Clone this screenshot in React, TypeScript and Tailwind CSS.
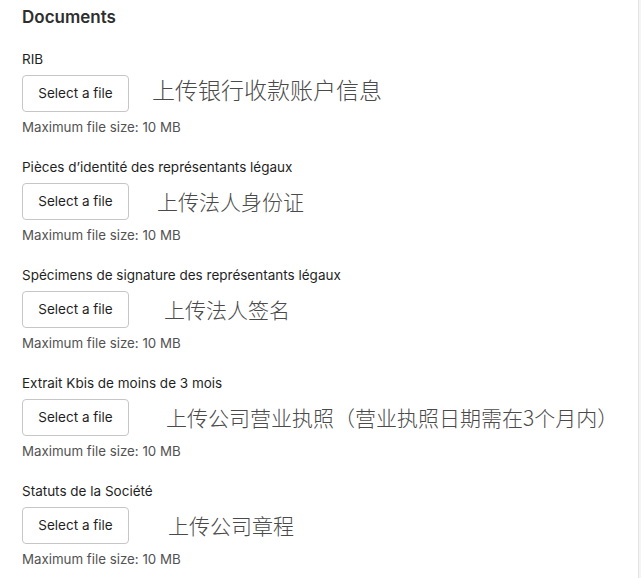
const sections = [
  { label: "RIB", note: "上传银行收款账户信息", noteClass: "ml-[23px] text-[23px] mb-[9px]" },
  { label: "Pièces d’identité des représentants légaux", note: "上传法人身份证", noteClass: "ml-[28px] text-[21px]" },
  { label: "Spécimens de signature des représentants légaux", note: "上传法人签名", noteClass: "ml-[35px] text-[21px]" },
  { label: "Extrait Kbis de moins de 3 mois", note: "上传公司营业执照（营业执照日期需在3个月内）", noteClass: "ml-[37px] text-[21px]" },
  { label: "Statuts de la Société", note: "上传公司章程", noteClass: "ml-[39px] text-[21px]" },
];

export default function App() {
  return (
    <div className="flex h-[578px] w-[641px] overflow-hidden bg-white font-['Inter','Noto_Sans',sans-serif] text-[#161616]">
      <main className="w-[638px] pl-[22px] pt-[5px]">
        <h2 className="text-[17px] font-semibold leading-6 text-[#2e2e2e]">Documents</h2>

        <div className="mt-[22px] space-y-6">
          {sections.map((s) => (
            <section key={s.label}>
              <p className="text-[13.5px] leading-4 text-[#1f1f1f]">{s.label}</p>
              <div className="mt-2 flex items-center">
                <button className="h-[37px] w-[107px] shrink-0 rounded-[4px] border border-[#c6c6c6] bg-white text-[13.5px] text-[#1f1f1f]">
                  Select a file
                </button>
                <span
                  className={`${s.noteClass} whitespace-nowrap leading-none text-[#4a4a4a] font-['Noto_Sans_CJK_SC',sans-serif] font-light`}
                >
                  {s.note}
                </span>
              </div>
              <p className="mt-[7px] text-[13.3px] leading-4 text-[#525252]">Maximum file size: 10 MB</p>
            </section>
          ))}
        </div>
      </main>
      <div className="w-px bg-[#e3e3e3]" />
      <div className="w-[2px] bg-[#f5f5f5]" />
    </div>
  );
}
